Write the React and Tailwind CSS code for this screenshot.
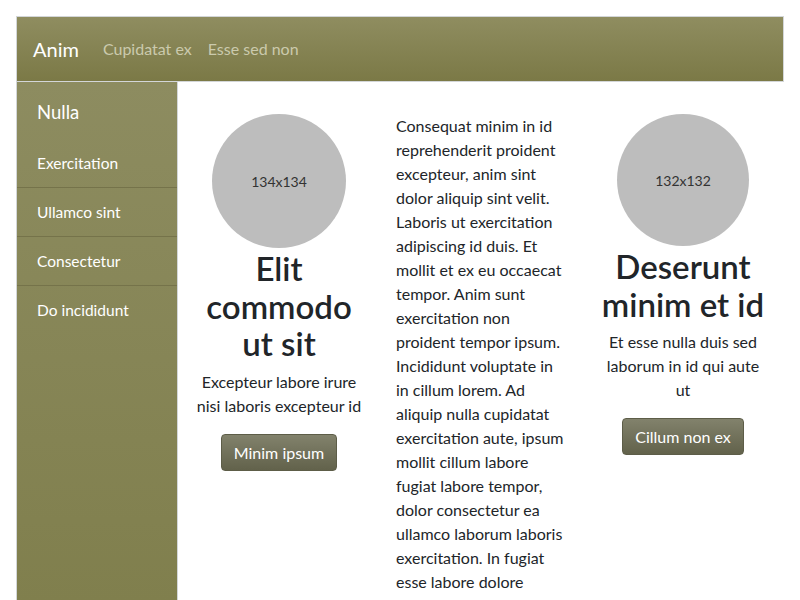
const sideItems = ["Exercitation", "Ullamco sint", "Consectetur", "Do incididunt"];

function Avatar({ size, label }) {
  return (
    <div
      className={`mx-auto flex items-center justify-center rounded-full bg-[#bdbdbd] text-[14px] text-[#333] ${
        size === 134 ? "h-[134px] w-[134px]" : "h-[132px] w-[132px]"
      }`}
    >
      {label}
    </div>
  );
}

function Card({ size, label, title, text, button }) {
  return (
    <div className="flex flex-col items-center text-center">
      <Avatar size={size} label={label} />
      <h2 className="mt-[2px] text-[33px] font-semibold leading-[37.5px] text-[#212529]">{title}</h2>
      <p className="mt-[7px] text-[16px] leading-[24px] text-[#212529]">{text}</p>
      <button className="mt-[16px] rounded-[4px] border border-[#5d5d48] bg-gradient-to-b from-[#82826c] to-[#62624b] px-3 py-[6px] text-[16px] leading-[23px] text-white">
        {button}
      </button>
    </div>
  );
}

export default function App() {
  return (
    <div className="h-[600px] overflow-hidden bg-white px-4 pt-4 font-['Lato',sans-serif]">
      <nav className="flex h-[66px] items-center border border-[#d3d6d8] bg-gradient-to-b from-[#8f8d60] to-[#7b7946] px-4">
        <span className="mr-6 text-[20px] text-white">Anim</span>
        <span className="mr-4 text-[16px] text-[#cbcaad]">Cupidatat ex</span>
        <span className="text-[16px] text-[#cbcaad]">Esse sed non</span>
      </nav>
      <div className="flex">
        <aside className="h-[520px] w-[162px] shrink-0 border-x border-[#d3d6d8] bg-gradient-to-b from-[#8d8c60] to-[#807f4d]">
          <div className="px-5 pt-[17px] pb-[12px] text-[18.5px] text-white">Nulla</div>
          {sideItems.map((item, i) => (
            <div
              key={item}
              className={`px-5 py-[12px] text-[15.5px] leading-[24px] text-white ${
                i < sideItems.length - 1 ? "border-b border-[#75734a]" : ""
              }`}
            >
              {item}
            </div>
          ))}
        </aside>
        <main className="grid flex-1 grid-cols-3 gap-8 px-4 pt-8">
          <Card
            size={134}
            label="134x134"
            title="Elit commodo ut sit"
            text="Excepteur labore irure nisi laboris excepteur id"
            button="Minim ipsum"
          />
          <p className="text-[16px] leading-[24px] text-[#212529]">
            Consequat minim in id reprehenderit proident excepteur, anim sint dolor aliquip sint velit. Laboris ut
            exercitation adipiscing id duis. Et mollit et ex eu occaecat tempor. Anim sunt exercitation non proident
            tempor ipsum. Incididunt voluptate in in cillum lorem. Ad aliquip nulla cupidatat exercitation aute, ipsum
            mollit cillum labore fugiat labore tempor, dolor consectetur ea ullamco laborum laboris exercitation. In
            fugiat esse labore dolore
          </p>
          <Card
            size={132}
            label="132x132"
            title="Deserunt minim et id"
            text="Et esse nulla duis sed laborum in id qui aute ut"
            button="Cillum non ex"
          />
        </main>
      </div>
    </div>
  );
}
